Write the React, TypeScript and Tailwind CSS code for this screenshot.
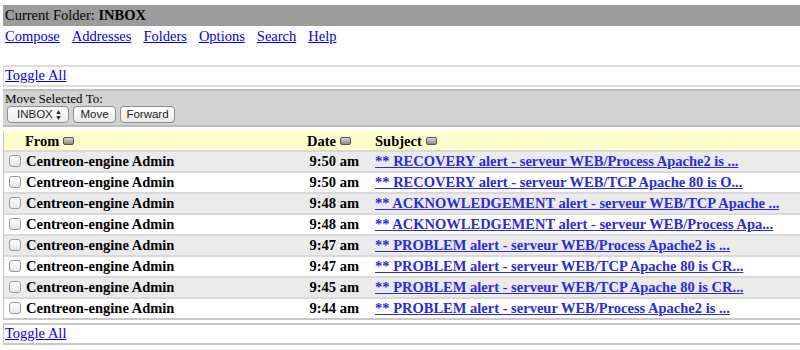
const rows = [
  { time: "9:50 am", subject: "** RECOVERY alert - serveur WEB/Process Apache2 is ..." },
  { time: "9:50 am", subject: "** RECOVERY alert - serveur WEB/TCP Apache 80 is O..." },
  { time: "9:48 am", subject: "** ACKNOWLEDGEMENT alert - serveur WEB/TCP Apache ..." },
  { time: "9:48 am", subject: "** ACKNOWLEDGEMENT alert - serveur WEB/Process Apa..." },
  { time: "9:47 am", subject: "** PROBLEM alert - serveur WEB/Process Apache2 is ..." },
  { time: "9:47 am", subject: "** PROBLEM alert - serveur WEB/TCP Apache 80 is CR..." },
  { time: "9:45 am", subject: "** PROBLEM alert - serveur WEB/TCP Apache 80 is CR..." },
  { time: "9:44 am", subject: "** PROBLEM alert - serveur WEB/Process Apache2 is ..." },
];

const navLinks = ["Compose", "Addresses", "Folders", "Options", "Search", "Help"];

function SortIcon() {
  return (
    <span className="inline-block shrink-0 w-[11px] h-[8px] ml-[4px] rounded-[2px] border border-[#555] bg-gradient-to-b from-[#d8d8d8] to-[#8a8a8a]" />
  );
}

function Checkbox() {
  return (
    <span className="inline-block shrink-0 w-[12px] h-[12px] rounded-[3px] border border-[#9a9a9a] bg-gradient-to-b from-white to-[#e6e6e6]" />
  );
}

function MacButton({ children, className }: { children: React.ReactNode; className?: string }) {
  return (
    <span
      className={
        "inline-flex items-center shrink-0 h-[17px] rounded-[4px] border border-[#8e8e8e] bg-gradient-to-b from-white to-[#ececec] text-[11.5px] text-[#222] leading-none " +
        (className ?? "")
      }
      style={{ fontFamily: '"Liberation Sans", Arial, sans-serif' }}
    >
      {children}
    </span>
  );
}

export default function App() {
  return (
    <div
      className="w-[800px] h-[350px] overflow-hidden bg-white pl-[3px] pt-[5px] text-[14.5px] text-black leading-[20px]"
      style={{ fontFamily: '"Liberation Serif", "Times New Roman", serif' }}
    >
      <div className="h-[21px] bg-[#9c9c9c] pl-[2px] leading-[21px]">
        Current Folder: <b>INBOX</b>
      </div>

      <div className="flex gap-[12px] pl-[2px] h-[22px] items-center pb-[3px]">
        {navLinks.map((l) => (
          <a key={l} className="text-[#0000ee] underline">
            {l}
          </a>
        ))}
      </div>

      <div className="mt-[17px] h-[22px] border-y-2 border-l border-[#dcdcdc] pl-[1px] leading-[16px]">
        <a className="text-[#0000ee] underline">Toggle All</a>
      </div>

      <div className="mt-[2px] h-[38px] bg-[#d3d3d3] border-t-2 border-b-2 border-[#bdbdbd] pl-[2px]">
        <div className="text-[13px] leading-[15px]">Move Selected To:</div>
        <div className="flex gap-[4px] pl-[2px]">
          <MacButton className="w-[62px] pl-[9px] pr-[6px] justify-between">
            <span>INBOX</span>
            <span className="text-[7px] leading-[6px] flex flex-col">
              <span>▲</span>
              <span>▼</span>
            </span>
          </MacButton>
          <MacButton className="w-[43px] justify-center">Move</MacButton>
          <MacButton className="w-[55px] justify-center">Forward</MacButton>
        </div>
      </div>

      <div className="mt-[4px] border-l border-b-2 border-[#c8c8c8]">
        <div className="flex h-[19px] bg-[#ffffcc] font-bold items-center">
          <div className="w-[297px] shrink-0 pl-[21px] flex items-center">
            From
            <SortIcon />
          </div>
          <div className="w-[74px] shrink-0 pl-[6px] flex items-center">
            Date
            <SortIcon />
          </div>
          <div className="flex-1 flex items-center">
            Subject
            <SortIcon />
          </div>
        </div>
        {rows.map((r, i) => (
          <div
            key={i}
            className={
              "flex h-[21px] items-center font-bold border-t-2 border-[#d9d9d9] pb-[2px] " +
              (i % 2 === 0 ? "bg-[#ebebeb]" : "bg-white")
            }
          >
            <div className="w-[297px] shrink-0 flex items-center pl-[5px] gap-[5px]">
              <Checkbox />
              <span>Centreon-engine Admin</span>
            </div>
            <div className="w-[74px] shrink-0 text-right pr-[16px]">{r.time}</div>
            <div className="flex-1 min-w-0 whitespace-nowrap overflow-hidden">
              <a className="text-[#2a2ae0] underline">{r.subject}</a>
            </div>
          </div>
        ))}
      </div>

      <div className="mt-[3px] h-[22px] border-y-2 border-l border-[#c8c8c8] pl-[1px] leading-[16px]">
        <a className="text-[#0000ee] underline">Toggle All</a>
      </div>
    </div>
  );
}
